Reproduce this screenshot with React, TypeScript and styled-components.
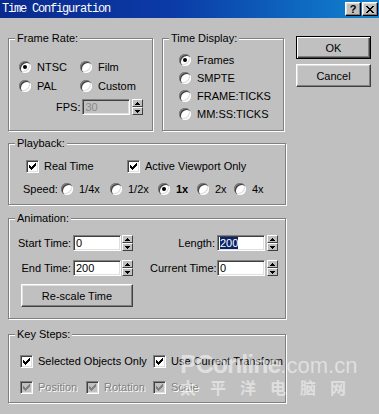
import React from 'react';
import styled, { createGlobalStyle } from 'styled-components';

const GlobalStyle = createGlobalStyle`
  html, body {
    margin: 0;
    padding: 0;
    background: #c0c0c0;
  }
  body {
    font-family: 'Liberation Sans', Arial, sans-serif;
    font-size: 11px;
    color: #000;
  }
`;

const Window = styled.div`
  position: relative;
  width: 379px;
  height: 414px;
  background: #c0c0c0;
  overflow: hidden;
`;

const TitleBar = styled.div`
  height: 18px;
  display: flex;
  align-items: center;
  padding: 0 1px 0 2px;
  background: linear-gradient(to right, #0a2a8e 0%, #0b3aa6 45%, #1084d0 100%);
`;

const Title = styled.span`
  flex: 1;
  color: #fff;
  font-family: 'Liberation Mono', 'DejaVu Sans Mono', monospace;
  font-size: 12px;
  letter-spacing: -1.2px;
`;

const CaptionButton = styled.div<{ $ml?: number }>`
  box-sizing: border-box;
  width: 16px;
  height: 14px;
  margin-left: ${(p) => p.$ml ?? 0}px;
  background: #c0c0c0;
  border: 1px solid;
  border-color: #fff #000 #000 #fff;
  box-shadow: inset -1px -1px 0 #808080, inset 1px 1px 0 #dfdfdf;
  display: flex;
  align-items: center;
  justify-content: center;
  font: bold 11px 'Liberation Sans', Arial, sans-serif;
  line-height: 11px;
`;

const Body = styled.div`
  display: flex;
  padding: 14px 0 0 8px;
`;

const LeftColumn = styled.div`
  width: 279px;
  display: flex;
  flex-direction: column;
`;

const TopRow = styled.div`
  display: flex;
  gap: 9px;
`;

const GroupBox = styled.fieldset<{ $w: number; $h: number; $mt?: number }>`
  box-sizing: border-box;
  width: ${(p) => p.$w}px;
  height: ${(p) => p.$h}px;
  margin: ${(p) => p.$mt ?? 0}px 0 0 0;
  padding: 0;
  min-width: 0;
  border: 1px solid #808080;
  box-shadow: 1px 1px 0 #fff, inset 1px 1px 0 #fff;
`;

const Legend = styled.legend`
  margin-left: 6px;
  padding: 0 2px;
  height: 13px;
  line-height: 13px;
  background: #c0c0c0;
`;

const Content = styled.div<{ $pt: number; $pl: number }>`
  padding: ${(p) => p.$pt}px 0 0 ${(p) => p.$pl}px;
`;

const RadioGrid = styled.div<{ $cols: string; $gap: number }>`
  display: grid;
  grid-template-columns: ${(p) => p.$cols};
  grid-auto-rows: 18px;
  row-gap: ${(p) => p.$gap}px;
`;

const OptionRow = styled.div<{ $w?: number }>`
  display: flex;
  align-items: center;
  height: 18px;
  width: ${(p) => (p.$w ? `${p.$w}px` : 'auto')};
  flex: none;
  white-space: nowrap;
`;

const RadioCircle = styled.span<{ $on?: boolean }>`
  position: relative;
  flex: none;
  width: 12px;
  height: 12px;
  border-radius: 50%;
  background: #fff;
  box-shadow: inset 1px 1px 0 #808080, inset 2px 2px 0 #404040,
    inset -1px -1px 0 #ffffff, inset -2px -2px 0 #dfdfdf;
  &::after {
    content: '';
    display: ${(p) => (p.$on ? 'block' : 'none')};
    position: absolute;
    left: 4px;
    top: 4px;
    width: 4px;
    height: 4px;
    border-radius: 50%;
    background: #000;
  }
`;

const CheckBox = styled.span<{ $disabled?: boolean }>`
  box-sizing: border-box;
  flex: none;
  width: 13px;
  height: 13px;
  background: ${(p) => (p.$disabled ? '#c0c0c0' : '#fff')};
  border: 1px solid;
  border-color: #808080 #fff #fff #808080;
  box-shadow: inset 1px 1px 0 #404040, inset -1px -1px 0 #dfdfdf;
  display: flex;
  align-items: center;
  justify-content: center;
  color: ${(p) => (p.$disabled ? '#808080' : '#000')};
`;

const OptionText = styled.span<{ $ml: number; $bold?: boolean; $disabled?: boolean }>`
  margin-left: ${(p) => p.$ml}px;
  font-weight: ${(p) => (p.$bold ? 'bold' : 'normal')};
  color: ${(p) => (p.$disabled ? '#808080' : '#000')};
  text-shadow: ${(p) => (p.$disabled ? '1px 1px 0 #fff' : 'none')};
`;

const FieldLine = styled.div<{ $ml: number; $mt: number }>`
  display: flex;
  align-items: center;
  margin: ${(p) => p.$mt}px 0 0 ${(p) => p.$ml}px;
`;

const FieldLabel = styled.span`
  padding-right: 2px;
  white-space: nowrap;
`;

const Edit = styled.div<{ $disabled?: boolean }>`
  box-sizing: border-box;
  width: 48px;
  height: 16px;
  padding: 1px 0 0 2px;
  background: ${(p) => (p.$disabled ? '#c0c0c0' : '#fff')};
  color: ${(p) => (p.$disabled ? '#8a8a8a' : '#000')};
  border: 1px solid;
  border-color: #808080 #fff #fff #808080;
  box-shadow: inset 1px 1px 0 #404040, inset -1px -1px 0 #dfdfdf;
  line-height: 12px;
  white-space: nowrap;
`;

const Selected = styled.span`
  background: #0a246a;
  color: #fff;
`;

const Spinner = styled.div<{ $ml: number }>`
  display: flex;
  flex-direction: column;
  width: 11px;
  height: 16px;
  margin-left: ${(p) => p.$ml}px;
`;

const SpinHalf = styled.div`
  flex: 1;
  box-sizing: border-box;
  background: #c0c0c0;
  border: 1px solid;
  border-color: #fff #404040 #404040 #fff;
  display: flex;
  align-items: center;
  justify-content: center;
`;

const AnimGrid = styled.div`
  display: grid;
  grid-template-columns: 55px 48px 12px 17px 67px 48px 13px;
  grid-template-rows: 16px 16px;
  row-gap: 9px;
  align-items: center;
`;

const GridLabel = styled.span`
  text-align: right;
  padding-right: 2px;
  white-space: nowrap;
`;

const PushButton = styled.div<{ $w: number; $h: number; $default?: boolean; $mt?: number; $ml?: number }>`
  box-sizing: border-box;
  width: ${(p) => p.$w}px;
  height: ${(p) => p.$h}px;
  margin: ${(p) => p.$mt ?? 0}px 0 0 ${(p) => p.$ml ?? 0}px;
  background: #c0c0c0;
  border: 1px solid #000;
  border-color: ${(p) => (p.$default ? '#000' : '#fff #404040 #404040 #fff')};
  box-shadow: ${(p) =>
    p.$default
      ? 'inset 1px 1px 0 #fff, inset -1px -1px 0 #404040, inset -2px -2px 0 #808080'
      : 'inset -1px -1px 0 #808080, inset 1px 1px 0 #dfdfdf'};
  display: flex;
  align-items: center;
  justify-content: center;
  font-size: 11px;
`;

const RightColumn = styled.div`
  display: flex;
  flex-direction: column;
  margin: 4px 0 0 9px;
  gap: 5px;
`;

const SpeedGrid = styled.div`
  display: grid;
  grid-template-columns: 38px 49px 48px 39px 37px auto;
  margin: 5px 0 0 14px;
`;

const KeyGrid = styled.div`
  display: grid;
  grid-template-columns: 66px 67px auto;
  grid-auto-rows: 18px;
  row-gap: 8px;
`;

const Watermark = styled.div`
  position: absolute;
  left: 180px;
  top: 352px;
  pointer-events: none;
  color: rgba(255, 255, 255, 0.5);
  white-space: nowrap;
`;

const MarkLatin = styled.div`
  height: 25px;
  line-height: 25px;
  font-family: 'Liberation Sans', Arial, sans-serif;
`;

const MarkBig = styled.span`
  font-size: 25px;
  font-weight: bold;
  letter-spacing: -1px;
`;

const MarkSmall = styled.span`
  font-size: 22px;
`;

const MarkCjk = styled.div`
  margin-top: 1px;
  font-family: 'Noto Sans CJK SC', sans-serif;
  font-size: 16px;
  line-height: 18px;
  letter-spacing: 14px;
  font-weight: bold;
`;

const CheckMark = () => (
  <svg width="9" height="9" viewBox="0 0 9 9" shapeRendering="crispEdges">
    <path
      fill="currentColor"
      d="M7 1h1v1h-1z M6 2h2v1h-2z M1 3h1v1h-1z M5 3h3v1h-3z M1 4h2v1h-2z M4 4h3v1h-3z M1 5h5v1h-5z M2 6h3v1h-3z M3 7h1v1h-1z"
    />
  </svg>
);

const Arrow = ({ up }: { up?: boolean }) => (
  <svg width="5" height="3" viewBox="0 0 5 3" shapeRendering="crispEdges">
    <path fill="#000" d={up ? 'M2 0h1v1h1v1h1v1h-5v-1h1v-1h1z' : 'M0 0h5v1h-1v1h-1v1h-1v-1h-1v-1h-1z'} />
  </svg>
);

const Spin = ({ ml }: { ml: number }) => (
  <Spinner $ml={ml}>
    <SpinHalf>
      <Arrow up />
    </SpinHalf>
    <SpinHalf>
      <Arrow />
    </SpinHalf>
  </Spinner>
);

const Radio = ({ label, on, w, bold }: { label: string; on?: boolean; w?: number; bold?: boolean }) => (
  <OptionRow $w={w}>
    <RadioCircle $on={on} />
    <OptionText $ml={6} $bold={bold}>
      {label}
    </OptionText>
  </OptionRow>
);

const Check = ({ label, w, disabled, span }: { label: string; w?: number; disabled?: boolean; span?: number }) => (
  <OptionRow $w={w} style={span ? { gridColumn: `span ${span}` } : undefined}>
    <CheckBox $disabled={disabled}>
      <CheckMark />
    </CheckBox>
    <OptionText $ml={5} $disabled={disabled}>
      {label}
    </OptionText>
  </OptionRow>
);

const App = () => (
  <Window>
    <GlobalStyle />
    <TitleBar>
      <Title>Time Configuration</Title>
      <CaptionButton>?</CaptionButton>
      <CaptionButton $ml={1}>
        <svg width="8" height="7" viewBox="0 0 8 7" shapeRendering="crispEdges">
          <path
            fill="#000"
            d="M0 0h2v1h-2z M6 0h2v1h-2z M1 1h2v1h-2z M5 1h2v1h-2z M2 2h4v1h-4z M3 3h2v1h-2z M2 4h4v1h-4z M1 5h2v1h-2z M5 5h2v1h-2z M0 6h2v1h-2z M6 6h2v1h-2z"
          />
        </svg>
      </CaptionButton>
    </TitleBar>

    <Body>
      <LeftColumn>
        <TopRow>
          <GroupBox $w={145} $h={99}>
            <Legend>Frame Rate:</Legend>
            <Content $pt={13} $pl={10}>
              <RadioGrid $cols="61px auto" $gap={1}>
                <Radio label="NTSC" on />
                <Radio label="Film" />
                <Radio label="PAL" />
                <Radio label="Custom" />
              </RadioGrid>
              <FieldLine $ml={37} $mt={4}>
                <FieldLabel>FPS:</FieldLabel>
                <Edit $disabled>30</Edit>
                <Spin ml={2} />
              </FieldLine>
            </Content>
          </GroupBox>

          <GroupBox $w={122} $h={99}>
            <Legend>Time Display:</Legend>
            <Content $pt={6} $pl={16}>
              <RadioGrid $cols="auto" $gap={0}>
                <Radio label="Frames" on />
                <Radio label="SMPTE" />
                <Radio label="FRAME:TICKS" />
                <Radio label="MM:SS:TICKS" />
              </RadioGrid>
            </Content>
          </GroupBox>
        </TopRow>

        <GroupBox $w={278} $h={68} $mt={6}>
          <Legend>Playback:</Legend>
          <Content $pt={7} $pl={17}>
            <FieldLine $ml={0} $mt={0}>
              <Check label="Real Time" w={101} />
              <Check label="Active Viewport Only" />
            </FieldLine>
          </Content>
          <SpeedGrid>
            <OptionRow>Speed:</OptionRow>
            <Radio label="1/4x" />
            <Radio label="1/2x" />
            <Radio label="1x" on bold />
            <Radio label="2x" />
            <Radio label="4x" />
          </SpeedGrid>
        </GroupBox>

        <GroupBox $w={278} $h={107} $mt={7}>
          <Legend>Animation:</Legend>
          <Content $pt={10} $pl={9}>
            <AnimGrid>
              <GridLabel>Start Time:</GridLabel>
              <Edit>0</Edit>
              <Spin ml={1} />
              <span />
              <GridLabel>Length:</GridLabel>
              <Edit>
                <Selected>200</Selected>
              </Edit>
              <Spin ml={2} />

              <GridLabel>End Time:</GridLabel>
              <Edit>200</Edit>
              <Spin ml={1} />
              <span />
              <GridLabel>Current Time:</GridLabel>
              <Edit>0</Edit>
              <Spin ml={2} />
            </AnimGrid>
            <PushButton $w={112} $h={23} $mt={8} $ml={3}>
              Re-scale Time
            </PushButton>
          </Content>
        </GroupBox>

        <GroupBox $w={278} $h={75} $mt={9}>
          <Legend>Key Steps:</Legend>
          <Content $pt={11} $pl={11}>
            <KeyGrid>
              <Check label="Selected Objects Only" span={2} />
              <Check label="Use Current Transform" />
              <Check label="Position" disabled />
              <Check label="Rotation" disabled />
              <Check label="Scale" disabled />
            </KeyGrid>
          </Content>
        </GroupBox>
      </LeftColumn>

      <RightColumn>
        <PushButton $w={75} $h={23} $default>
          OK
        </PushButton>
        <PushButton $w={75} $h={23}>
          Cancel
        </PushButton>
      </RightColumn>
    </Body>

    <Watermark>
      <MarkLatin>
        <MarkBig>PConline</MarkBig>
        <MarkSmall>.com.cn</MarkSmall>
      </MarkLatin>
      <MarkCjk>太平洋电脑网</MarkCjk>
    </Watermark>
  </Window>
);

export default App;
